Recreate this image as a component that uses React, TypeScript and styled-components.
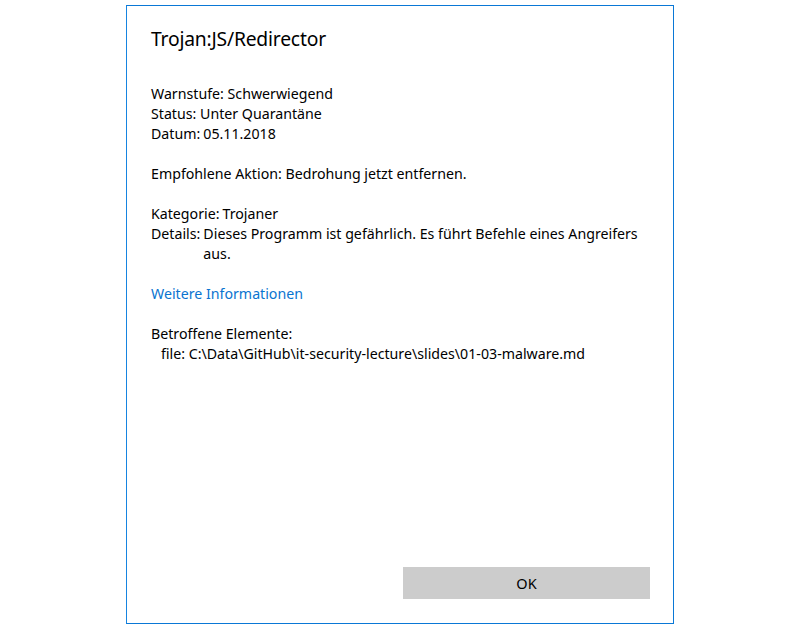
import React from "react";
import styled, { createGlobalStyle } from "styled-components";

const Global = createGlobalStyle`
  html, body { margin: 0; padding: 0; background: #ffffff; overflow: hidden; }
  body { font-family: "Noto Sans", "Open Sans", sans-serif; color: #000; }
`;

const Page = styled.div`
  width: 800px;
  height: 625px;
  padding-top: 5px;
  box-sizing: border-box;
  overflow: hidden;
`;

const Dialog = styled.div`
  box-sizing: border-box;
  width: 548px;
  height: 619px;
  margin-left: 126px;
  border: 1px solid #0a78d6;
  border-left-color: #1684e0;
  background: #fff;
  display: flex;
  flex-direction: column;
  padding: 19px 23px 24px 24px;
`;

const Title = styled.h1`
  margin: 0;
  font-weight: 400;
  font-size: 19.3px;
  line-height: 28px;
  letter-spacing: -0.2px;
`;

const Body = styled.div`
  display: flex;
  flex-direction: column;
  gap: 20px;
  margin-top: 31px;
  flex: 1;
`;

const Section = styled.div`
  display: flex;
  flex-direction: column;
  font-size: 14.2px;
  line-height: 20px;
`;

const Line = styled.div<{ $indent?: number }>`
  padding-left: ${(p) => p.$indent ?? 0}px;
  white-space: nowrap;
`;

const Pair = styled.div`
  display: flex;
  gap: 3px;
`;

const Label = styled.span`
  flex: none;
`;

const Value = styled.span`
  flex: 1;
  max-width: 447px;
`;

const Link = styled.a`
  color: #0a74d0;
  text-decoration: none;
  font-size: 14.2px;
  line-height: 20px;
`;

const Footer = styled.div`
  display: flex;
  justify-content: flex-end;
`;

const Button = styled.button`
  width: 247px;
  height: 32px;
  border: none;
  background: #cccccc;
  font-family: inherit;
  font-size: 14.5px;
  color: #000;
  padding: 0;
`;

const Behind = styled.div`
  margin-left: 165px;
  font-size: 15px;
  line-height: 20px;
  margin-top: -3px;
  color: #8a8a8a;
  white-space: nowrap;
`;

export default function App() {
  return (
    <>
      <Global />
      <Page>
        <Dialog>
          <Title>Trojan:JS/Redirector</Title>
          <Body>
            <Section>
              <Line>Warnstufe: Schwerwiegend</Line>
              <Line>Status: Unter Quarantäne</Line>
              <Pair>
                <Label>Datum:</Label>
                <Value>05.11.2018</Value>
              </Pair>
            </Section>
            <Section>
              <Line>Empfohlene Aktion: Bedrohung jetzt entfernen.</Line>
            </Section>
            <Section>
              <Pair>
                <Label>Kategorie:</Label>
                <Value>Trojaner</Value>
              </Pair>
              <Pair>
                <Label>Details:</Label>
                <Value>Dieses Programm ist gefährlich. Es führt Befehle eines Angreifers aus.</Value>
              </Pair>
            </Section>
            <Section>
              <Link href="#">Weitere Informationen</Link>
            </Section>
            <Section>
              <Line>Betroffene Elemente:</Line>
              <Line $indent={10}>file: C:\Data\GitHub\it-security-lecture\slides\01-03-malware.md</Line>
            </Section>
          </Body>
          <Footer>
            <Button>OK</Button>
          </Footer>
        </Dialog>
        <Behind>Aktuelle Bedrohungen verwalten</Behind>
      </Page>
    </>
  );
}
